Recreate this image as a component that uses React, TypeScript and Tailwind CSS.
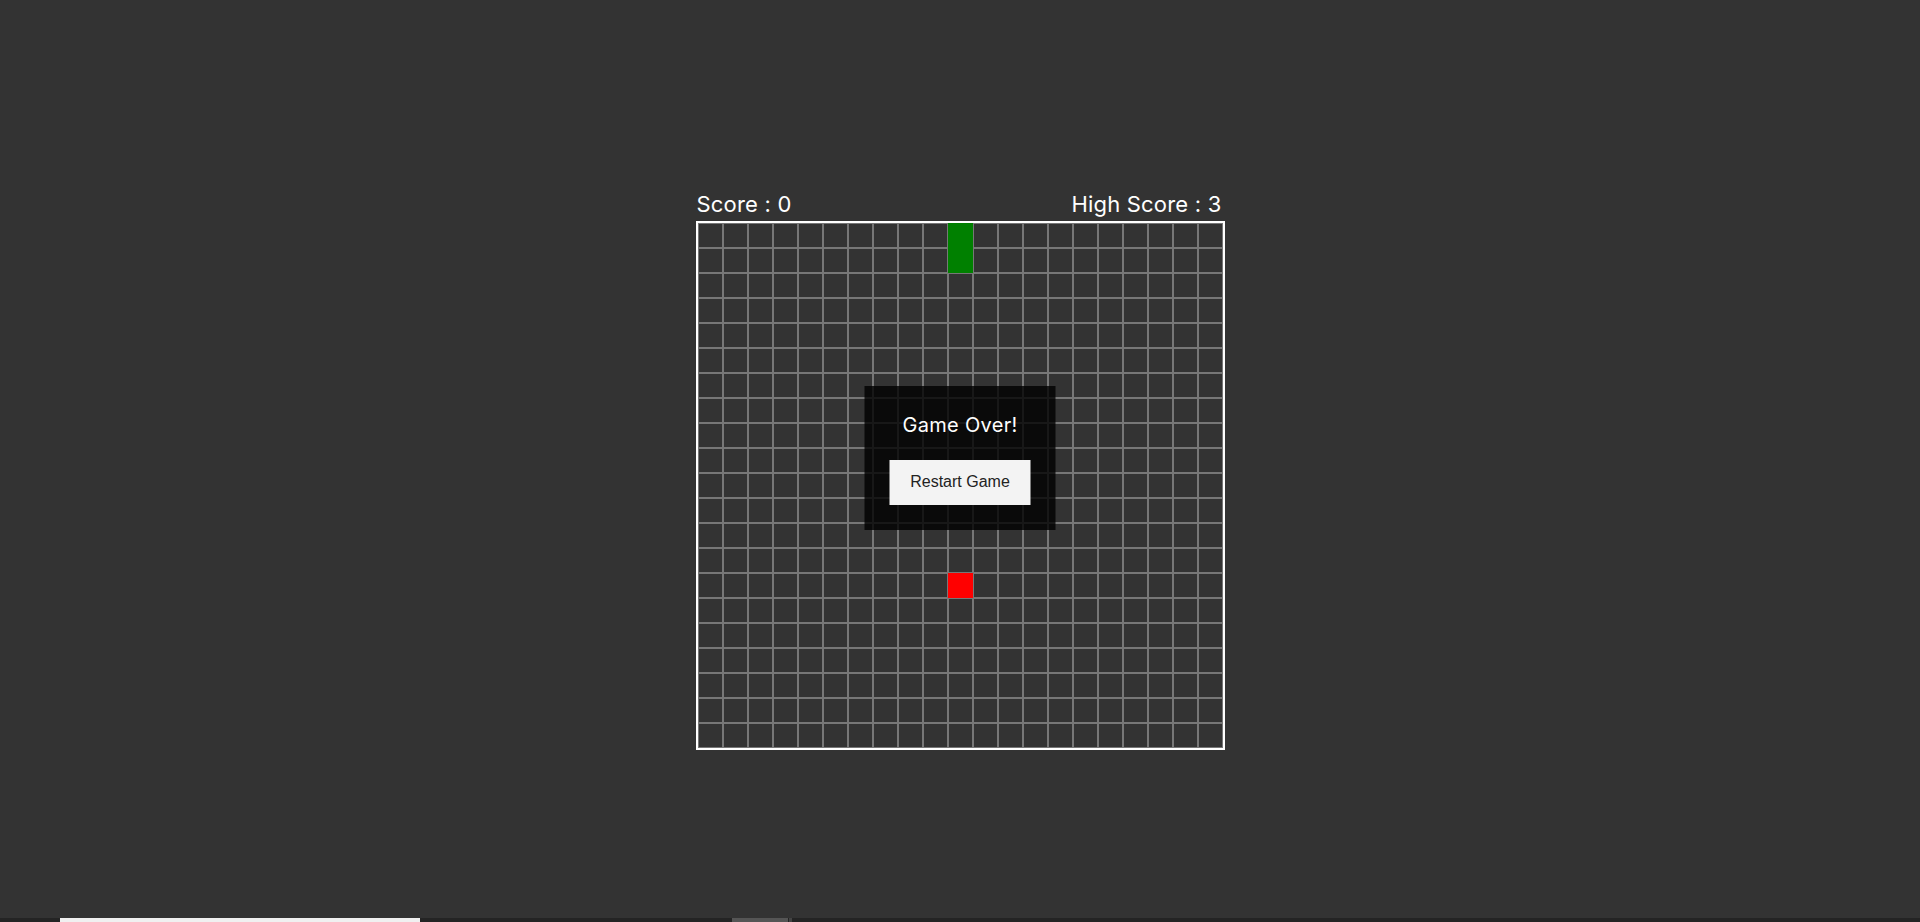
import React from 'react';

const SIZE = 21;
const snake = [
  { x: 10, y: 0 },
  { x: 10, y: 1 },
];
const food = { x: 10, y: 14 };

function Cell({ x, y }: { x: number; y: number }) {
  const isSnake = snake.some((s) => s.x === x && s.y === y);
  const isFood = food.x === x && food.y === y;
  if (isSnake) return <div className="w-[25px] h-[25px] bg-[#008000] border border-[#008000]" />;
  if (isFood) return <div className="w-[25px] h-[25px] bg-[#ff0000] border border-[#ff0000]" />;
  return <div className="w-[25px] h-[25px] border border-[#777777]" />;
}

export default function App() {
  const cells = [];
  for (let y = 0; y < SIZE; y++) {
    for (let x = 0; x < SIZE; x++) {
      cells.push(<Cell key={`${x}-${y}`} x={x} y={y} />);
    }
  }

  return (
    <div className="bg-[#333333] w-full flex flex-col" style={{ fontFamily: 'Inter, "Noto Sans", sans-serif' }}>
      <div className="h-[918px] pt-[189px]">
        <div className="w-[529px] mx-auto">
          <div className="flex justify-between items-center h-[30px] text-[22px] leading-[30px] tracking-[0.2px] text-white pl-[1px] pr-[3px]">
            <span>Score : 0</span>
            <span>High Score : 3</span>
          </div>
          <div className="mt-[2px] border-2 border-white relative">
            <div className="grid grid-cols-[repeat(21,25px)]">{cells}</div>
            <div className="absolute left-1/2 -translate-x-1/2 top-[163px] w-[191px] h-[144px] bg-black/80 pt-6 flex flex-col items-center">
              <div className="text-[20px] leading-[30px] tracking-[0.3px] text-white">Game Over!</div>
              <button
                className="mt-5 w-[141px] h-[45px] bg-[#f3f3f3] text-[#222222] text-[16px] flex items-center justify-center pb-[1px]"
                style={{ fontFamily: '"Liberation Sans", Arial, sans-serif' }}
              >
                Restart Game
              </button>
            </div>
          </div>
        </div>
      </div>
      <div className="h-[4px] bg-[#242424] flex">
        <div className="ml-[60px] w-[360px] bg-[#f0f0f0]" />
        <div className="ml-[312px] w-[56px] bg-[#555555]" />
        <div className="ml-[1px] w-[3px] bg-[#444444]" />
      </div>
    </div>
  );
}
